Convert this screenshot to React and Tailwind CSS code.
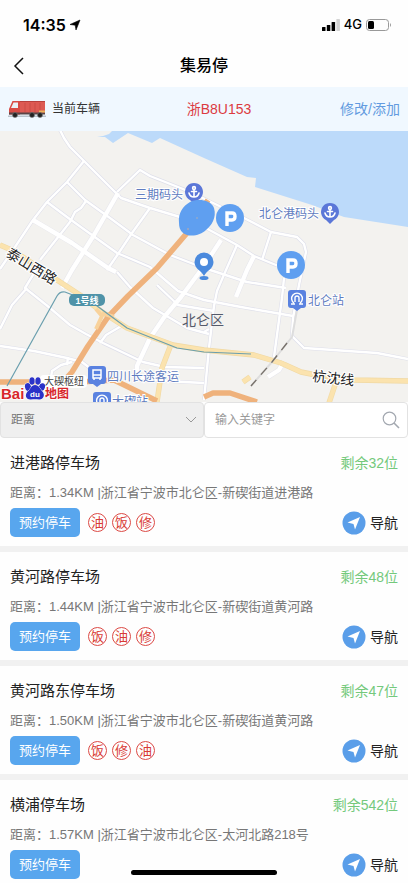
import React, { useState } from 'react';

const initialLots = [
  { id: 1, name: '进港路停车场', left: 32, distance: '1.34KM', address: '浙江省宁波市北仑区-新碶街道进港路', services: ['油', '饭', '修'] },
  { id: 2, name: '黄河路停车场', left: 48, distance: '1.44KM', address: '浙江省宁波市北仑区-新碶街道黄河路', services: ['饭', '油', '修'] },
  { id: 3, name: '黄河路东停车场', left: 47, distance: '1.50KM', address: '浙江省宁波市北仑区-新碶街道黄河路', services: ['饭', '修', '油'] },
  { id: 4, name: '横浦停车场', left: 542, distance: '1.57KM', address: '浙江省宁波市北仑区-太河北路218号', services: [] },
];

const minorRoads = [
  'M60 130 L64 138 L70 147 L84 161 L115 192 L121 198 L150 208 L180 217 L204 227 L237 245 L254 256 L276 265 L290 268',
  'M84 161 L67 182 L47 202 L33 220 L15 247 L0 269',
  'M117 192 L140 170 L150 176 L183 189 L207 200 L244 218 L271 232 L297 237 L304 244 L306 252 L299 285 L293 318 L292 336 L304 348 L377 353 L408 359',
  'M67 182 L85 200 L110 218 L133 235 L170 255 L204 268 L247 282 L286 288',
  'M47 202 L67 217 L85 230 L117 253 L150 267 L178 291 L204 300 L241 307 L293 316',
  'M86 201 L81 208 L75 212 L70 222 L40 260',
  'M150 208 L132 233 L118 254 L107 270',
  'M271 232 L262 260',
  'M237 245 L226 270 L217 291 L214 306 L209 348 L204 400',
  'M284 278 L282 298 L274 357',
  'M27 288 L12 305 L0 329',
  'M36 270 L25 288 L50 308 L70 325 L86 334 L103 343 L143 362 L165 367 L204 368',
  'M0 346 L34 351 L67 358 L82 362 L95 372',
  'M100 343 L106 335 L123 325',
  'M117 272 L130 287 L153 308 L187 328 L209 334',
  'M157 285 L178 305 L214 311',
  'M50 384 L52 371 L61 365 L72 362',
  'M68 357 L67 365',
  'M141 378 L165 381 L204 383',
  'M204 332 L209 329',
];

const mainRoads = [
  'M118 193 L94 235 L72 270 L62 288',
  'M33 220 L72 243 L108 268 L116 272',
  'M221 240 L204 266 L181 297 L165 316 L150 338 L137 366 L137 376',
  'M254 256 L247 270 L236 297',
  'M284 361 L279 370 L268 377',
];

const yellowRoads = [
  'M0 245 L14 251 L57 280 L80 295 L102 312 L127 328 L173 345 L204 350 L254 355 L281 363 L301 372 L316 375 L354 380 L408 381',
  'M170 347 L162 368 L157 402',
  'M336 382 L329 403',
  'M243 382 L250 377',
];

function Anchor({ x, y }) {
  return (
    <g transform={`translate(${x} ${y})`}>
      <path d="M0 12 L-4 8 A9 9 0 1 1 4 8 Z" fill="#5b77d8" />
      <g fill="none" stroke="#fff" strokeWidth="1.6" strokeLinecap="round">
        <circle cx="0" cy="-4" r="1.4" />
        <path d="M0 -2 V5 M-2.5 -0.5 H2.5 M-5 1 Q-4 5 0 5 Q4 5 5 1" />
      </g>
    </g>
  );
}

function ParkingPin({ x, y }) {
  return (
    <g transform={`translate(${x} ${y})`}>
      <circle r="14" fill="#5f9ff0" />
      <path d="M-3 8 V-5 H2 Q5 -5 5 -1.5 Q5 2 2 2 H-3" fill="none" stroke="#fff" strokeWidth="3.4" />
    </g>
  );
}

function StationBadge({ x, y, children }) {
  return (
    <g transform={`translate(${x} ${y})`}>
      <path d="M-6 -9 H6 Q9 -9 9 -6 V6 Q9 9 6 9 H4 L0 12 L-4 9 H-6 Q-9 9 -9 6 V-6 Q-9 -9 -6 -9 Z" fill="#5a82e0" />
      {children}
    </g>
  );
}

function MetroGlyph() {
  return (
    <g fill="none" stroke="#fff" strokeWidth="1.4">
      <path d="M-3 4 A5.4 5.4 0 1 1 3 4 M-6 5 H-2 M2 5 H6" />
      <path d="M-2 3 V-1 A2 2 0 0 1 2 -1 V3" />
    </g>
  );
}

function ParkingMap() {
  return (
    <svg viewBox="0 131 408 271" className="block w-full bg-[#f3f2ef]" role="img" aria-label="地图">
      {/* Sea */}
      <path d="M97 137 L105 137 L113 143 L128 133 L152 143 L160 138 L204 158 L247 177 L256 178 L255 187 L312 205 L344 217 L408 227 V131 H112 L109 134 L103 136 Z" fill="#bcdafa" />

      {/* Roads */}
      <g fill="none" strokeLinejoin="round">
        {minorRoads.map((d) => <path key={d} d={d} stroke="#dedfea" strokeWidth="3.6" />)}
        {mainRoads.map((d) => <path key={d} d={d} stroke="#e6e6ec" strokeWidth="5.4" />)}
        {minorRoads.map((d) => <path key={d} d={d} stroke="#fff" strokeWidth="2.4" />)}
        {mainRoads.map((d) => <path key={d} d={d} stroke="#fff" strokeWidth="4.4" />)}
        {yellowRoads.map((d) => <path key={d} d={d} stroke="#f0d9a4" strokeWidth="5.4" />)}
        {yellowRoads.map((d) => <path key={d} d={d} stroke="#fbe3ae" strokeWidth="4.2" />)}
        <path d="M208 200 L187 233 L157 268 L128 296 L108 317 L88 346 L72 372 L62 383 M0 382 H45 L62 383 L114 380 L157 401 M204 397 L213 393 L230 393 L257 402" stroke="#efb27c" strokeWidth="5.5" />
        <path d="M96 309 L102 316 L96 329 M102 313 L114 317" stroke="#f8d29b" strokeWidth="4" />
        <path d="M7 386 L57 296 Q60 291 65 292 L93 303 L127 328 L177 348 L204 352 L251 354" stroke="#6a9fae" strokeWidth="1.2" />
        <path d="M297 310 L292 337 L272 362 L251 386" stroke="#ddd" strokeWidth="2" />
        <path d="M287 343 L272 362 L251 386" stroke="#77716a" strokeWidth="1.4" strokeDasharray="9 7" />
      </g>

      {/* Subway line label */}
      <rect x="69" y="294" width="36" height="12" rx="5" fill="#4f93a8" />
      <text x="87" y="304" textAnchor="middle" className="text-[9px] font-bold" fill="#fff">1号线</text>

      {/* Place names */}
      <g fill="#5f7cc0" stroke="#fff" strokeWidth="2" paintOrder="stroke" className="text-[12px]">
        <text x="135" y="199">三期码头</text>
        <text x="259" y="218">北仑港码头</text>
        <text x="308" y="305">北仑站</text>
        <text x="107" y="381">四川长途客运</text>
        <text x="112" y="406">大碶站</text>
      </g>
      <text x="182" y="325" className="text-[14px]" fill="#555a6b">北仑区</text>
      <g fill="#222" stroke="#fff" strokeWidth="2" paintOrder="stroke" className="text-[14px]">
        <text transform="translate(5 256) rotate(31)">泰山西路</text>
        <text transform="translate(312 381) rotate(6)">杭沈线</text>
      </g>

      <StationBadge x={297} y={299}><MetroGlyph /></StationBadge>
      <StationBadge x={97} y={375}>
        <path d="M-4 -5 H4 V3 H-4 Z M-4 0 H4 M-3 3 V5 M3 3 V5" fill="none" stroke="#fff" strokeWidth="1.5" />
      </StationBadge>
      <StationBadge x={102} y={401}><MetroGlyph /></StationBadge>

      {/* Pins */}
      <Anchor x={194} y={192} />
      <Anchor x={330} y={212} />
      <path d="M179 223 C178 213 183 206 190 202 C198 198 211 200 214 208 C217 218 211 226 206 230 C200 236 188 238 182 232 C180 230 179 227 179 223 Z" fill="#5f9ff0" />
      <circle cx="197" cy="218" r="1" fill="#8fa8cc" />
      <circle cx="188" cy="229" r="1" fill="#a5a6b8" />
      <ParkingPin x={230} y={218} />
      <ParkingPin x={291} y={265} />
      <ellipse cx="204" cy="278" rx="4.5" ry="2" fill="#4b8add" />
      <path d="M204 276 C201 270 194.500 269 194.500 262 A9.500 9.500 0 1 1 213.500 262 C213.500 269 207 270 204 276 Z" fill="#4b8add" />
      <circle cx="204" cy="262" r="4" fill="#fff" />

      {/* Map provider */}
      <rect x="40" y="375" width="47" height="13" rx="4" fill="#fff" />
      <text x="44" y="385" className="text-[10px]" fill="#444">大碶枢纽</text>
      <g stroke="#fff" strokeWidth="1.5" paintOrder="stroke" fill="#d8262b">
        <text x="1" y="399" className="text-[15px] font-bold">Bai</text>
        <text x="45" y="398" className="text-[12px] font-bold">地图</text>
      </g>
      <g fill="#2b32c8" stroke="#fff" strokeWidth="1" paintOrder="stroke">
        <ellipse cx="28" cy="387" rx="3" ry="4" transform="rotate(-15 28 387)" />
        <ellipse cx="32" cy="381" rx="2.700" ry="3.800" />
        <ellipse cx="38" cy="381" rx="2.700" ry="3.800" />
        <ellipse cx="42" cy="387" rx="3" ry="3.800" transform="rotate(15 42 387)" />
        <path d="M35 385 C39 385 40 389 42 391 C46 395 43 400 39 399.500 C36 399 34 399 31 399.500 C26 400 24 395 28 391 C31 389 31 385 35 385 Z" />
      </g>
      <text x="35" y="397" textAnchor="middle" className="text-[8px] font-bold" fill="#fff">du</text>
    </svg>
  );
}

function Truck() {
  return (
    <svg viewBox="0 0 38 18" className="h-[18px] w-[38px]" aria-hidden="true">
      <path d="M0 15.500 H38 V17 H0 Z" fill="#b9c3cc" />
      <path d="M12 1 H37 V13 H12 Z" fill="#dd5a53" />
      <path d="M12 1 H37 V2 H12 Z" fill="#b8403c" />
      <path d="M17 3 V12 M22 3 V12 M27 3 V12 M32 3 V12" stroke="#cb4c46" strokeWidth="1" />
      <path d="M4.500 1 H12 V14.500 H1 V9 Z" fill="#d94b45" />
      <path d="M5.500 2.500 H10 V8 H3 Z" fill="#e9f1f6" />
      <path d="M1 12.500 H37 V14.500 H1 Z" fill="#5a4446" />
      <path d="M31 10.500 H37 V12.500 H31 Z" fill="#eab35a" />
      <g fill="#222" stroke="#777" strokeWidth="0.600">
        <circle cx="7" cy="15" r="2.500" />
        <circle cx="24" cy="15" r="2.500" />
        <circle cx="32" cy="15" r="2.500" />
      </g>
    </svg>
  );
}

function StatusBar() {
  return (
    <div className="flex h-11 items-center justify-between pt-[6px] pr-4 pl-[23px] text-black">
      <div className="flex items-center gap-[3px]">
        <span className="font-['Inter',sans-serif] text-[16px] font-semibold">14:35</span>
        <svg viewBox="0 0 12 12" className="h-3 w-3" aria-hidden="true">
          <path d="M11 1 L7 11 L6.200 6.200 L1 5.500 Z" fill="#000" stroke="#000" strokeWidth="0.600" strokeLinejoin="round" />
        </svg>
      </div>
      <div className="flex items-center gap-1">
        <svg viewBox="0 0 18 12" className="h-3 w-[18px]" aria-hidden="true">
          <rect x="0" y="8" width="3.500" height="4" rx="0.500" />
          <rect x="4.800" y="6" width="3.500" height="6" rx="0.500" />
          <rect x="9.600" y="3" width="3.500" height="9" rx="0.500" />
          <rect x="14.400" y="0" width="3.500" height="12" rx="0.500" fill="#d4d4d4" />
        </svg>
        <span className="font-['Inter',sans-serif] text-[13px] font-medium">4G</span>
        <svg viewBox="0 0 26 12" className="h-3 w-[26px]" aria-hidden="true">
          <rect x="0.500" y="0.500" width="22" height="11" rx="3" fill="none" stroke="#999" />
          <rect x="2" y="2" width="6" height="8" rx="1.500" />
          <path d="M24 4 Q26 6 24 8 Z" fill="#999" />
        </svg>
      </div>
    </div>
  );
}

function LotCard({ lot }) {
  return (
    <li className="border-b-[6px] border-[#f1f1f1] px-[10px] pt-[14px] pb-[9px]">
      <div className="flex items-center justify-between">
        <h2 className="text-[15px] leading-[22px] text-[#222]">{lot.name}</h2>
        <span className="text-[14px] leading-[22px] text-[#74c97c]">剩余{lot.left}位</span>
      </div>
      <p className="mt-[9px] text-[13px] leading-5 text-[#777]">
        距离：{lot.distance} |{lot.address}
      </p>
      <div className="mt-[5px] flex items-center justify-between">
        <div className="flex items-center gap-2">
          <button type="button" className="h-[29px] rounded-[5px] bg-[#58a6ee] px-[9px] text-[13px] leading-5 text-white">
            预约停车
          </button>
          <div className="flex gap-[5px]">
            {lot.services.map((service) => (
              <span key={service} className="flex h-[19px] w-[19px] items-center justify-center rounded-full border border-[#dc4a45] text-[13px] leading-4 text-[#d93a35]">
                {service}
              </span>
            ))}
          </div>
        </div>
        <button type="button" className="flex items-center gap-1 text-[14px] leading-5 text-[#222]">
          <svg viewBox="0 0 24 24" className="h-6 w-6" aria-hidden="true">
            <circle cx="12" cy="12" r="11.500" fill="#5a9ee9" />
            <path d="M18 6 L13 18.500 L11.500 13 L5.500 11.500 Z" fill="#fff" />
          </svg>
          导航
        </button>
      </div>
    </li>
  );
}

function App() {
  const [keyword, setKeyword] = useState('');
  const [sort, setSort] = useState('distance');

  return (
    <div className="flex h-screen flex-col overflow-hidden bg-[#fefefe] font-['Liberation_Sans','Noto_Sans_CJK_SC',sans-serif]">
      <StatusBar />

      {/* Header */}
      <header className="grid h-[43px] grid-cols-[1fr_auto_1fr] items-center px-3">
        <button type="button" aria-label="返回" className="w-fit">
          <svg viewBox="0 0 13 18" className="h-[18px] w-[13px]" fill="none" stroke="#111" strokeWidth="1.500" aria-hidden="true">
            <path d="M11 1 L3 9 L11 17" />
          </svg>
        </button>
        <h1 className="text-[16px] leading-6 font-medium text-black">集易停</h1>
      </header>

      {/* Current vehicle */}
      <div className="grid h-11 shrink-0 grid-cols-[1fr_auto_1fr] items-center bg-[#f0f8ff] px-2">
        <div className="flex items-center gap-[6px]">
          <Truck />
          <span className="text-[12px] leading-5 text-[#333]">当前车辆</span>
        </div>
        <span className="pl-[30px] text-[14px] leading-5 text-[#dc3b3f]">浙B8U153</span>
        <a href="#vehicle" className="justify-self-end text-[14px] leading-5 text-[#639be0]">修改/添加</a>
      </div>

      <div className="shrink-0">
        <ParkingMap />
      </div>

      {/* Sort and search */}
      <div className="grid h-9 shrink-0 grid-cols-2 text-[12px] text-[#777]">
        <div className="grid rounded-[4px] border border-[#e2e2e2] bg-[#efefef]">
          <select
            aria-label="排序"
            value={sort}
            onChange={(e) => setSort(e.target.value)}
            className="col-start-1 row-start-1 appearance-none px-[10px] leading-5 outline-none"
          >
            <option value="distance">距离</option>
          </select>
          <svg viewBox="0 0 12 8" className="pointer-events-none col-start-1 row-start-1 mr-[6px] h-2 w-3 self-center justify-self-end" fill="none" stroke="#999" aria-hidden="true">
            <path d="M1 1 L6 6 L11 1" />
          </svg>
        </div>
        <div className="flex items-center rounded-[4px] border border-[#e2e2e2] bg-white pr-[7px] pl-[10px]">
          <input
            type="text"
            aria-label="输入关键字"
            placeholder="输入关键字"
            value={keyword}
            onChange={(e) => setKeyword(e.target.value)}
            className="min-w-0 flex-1 leading-5 outline-none placeholder:text-[#9a9a9a]"
          />
          <button type="button" aria-label="搜索">
            <svg viewBox="0 0 18 18" className="h-[18px] w-[18px]" fill="none" stroke="#a3a8b0" strokeWidth="1.200" aria-hidden="true">
              <circle cx="7.500" cy="7.500" r="6.300" />
              <path d="M12 12 L17 17" strokeWidth="1.600" />
            </svg>
          </button>
        </div>
      </div>

      {/* Parking lots */}
      <ul className="min-h-0 flex-1 overflow-y-auto [scrollbar-width:none]">
        {initialLots.map((lot) => (
          <LotCard key={lot.id} lot={lot} />
        ))}
      </ul>

      {/* Home indicator */}
      <div className="fixed bottom-2 left-1/2 h-[5px] w-[146px] -translate-x-1/2 rounded-full bg-black" />
    </div>
  );
}

export default App;
